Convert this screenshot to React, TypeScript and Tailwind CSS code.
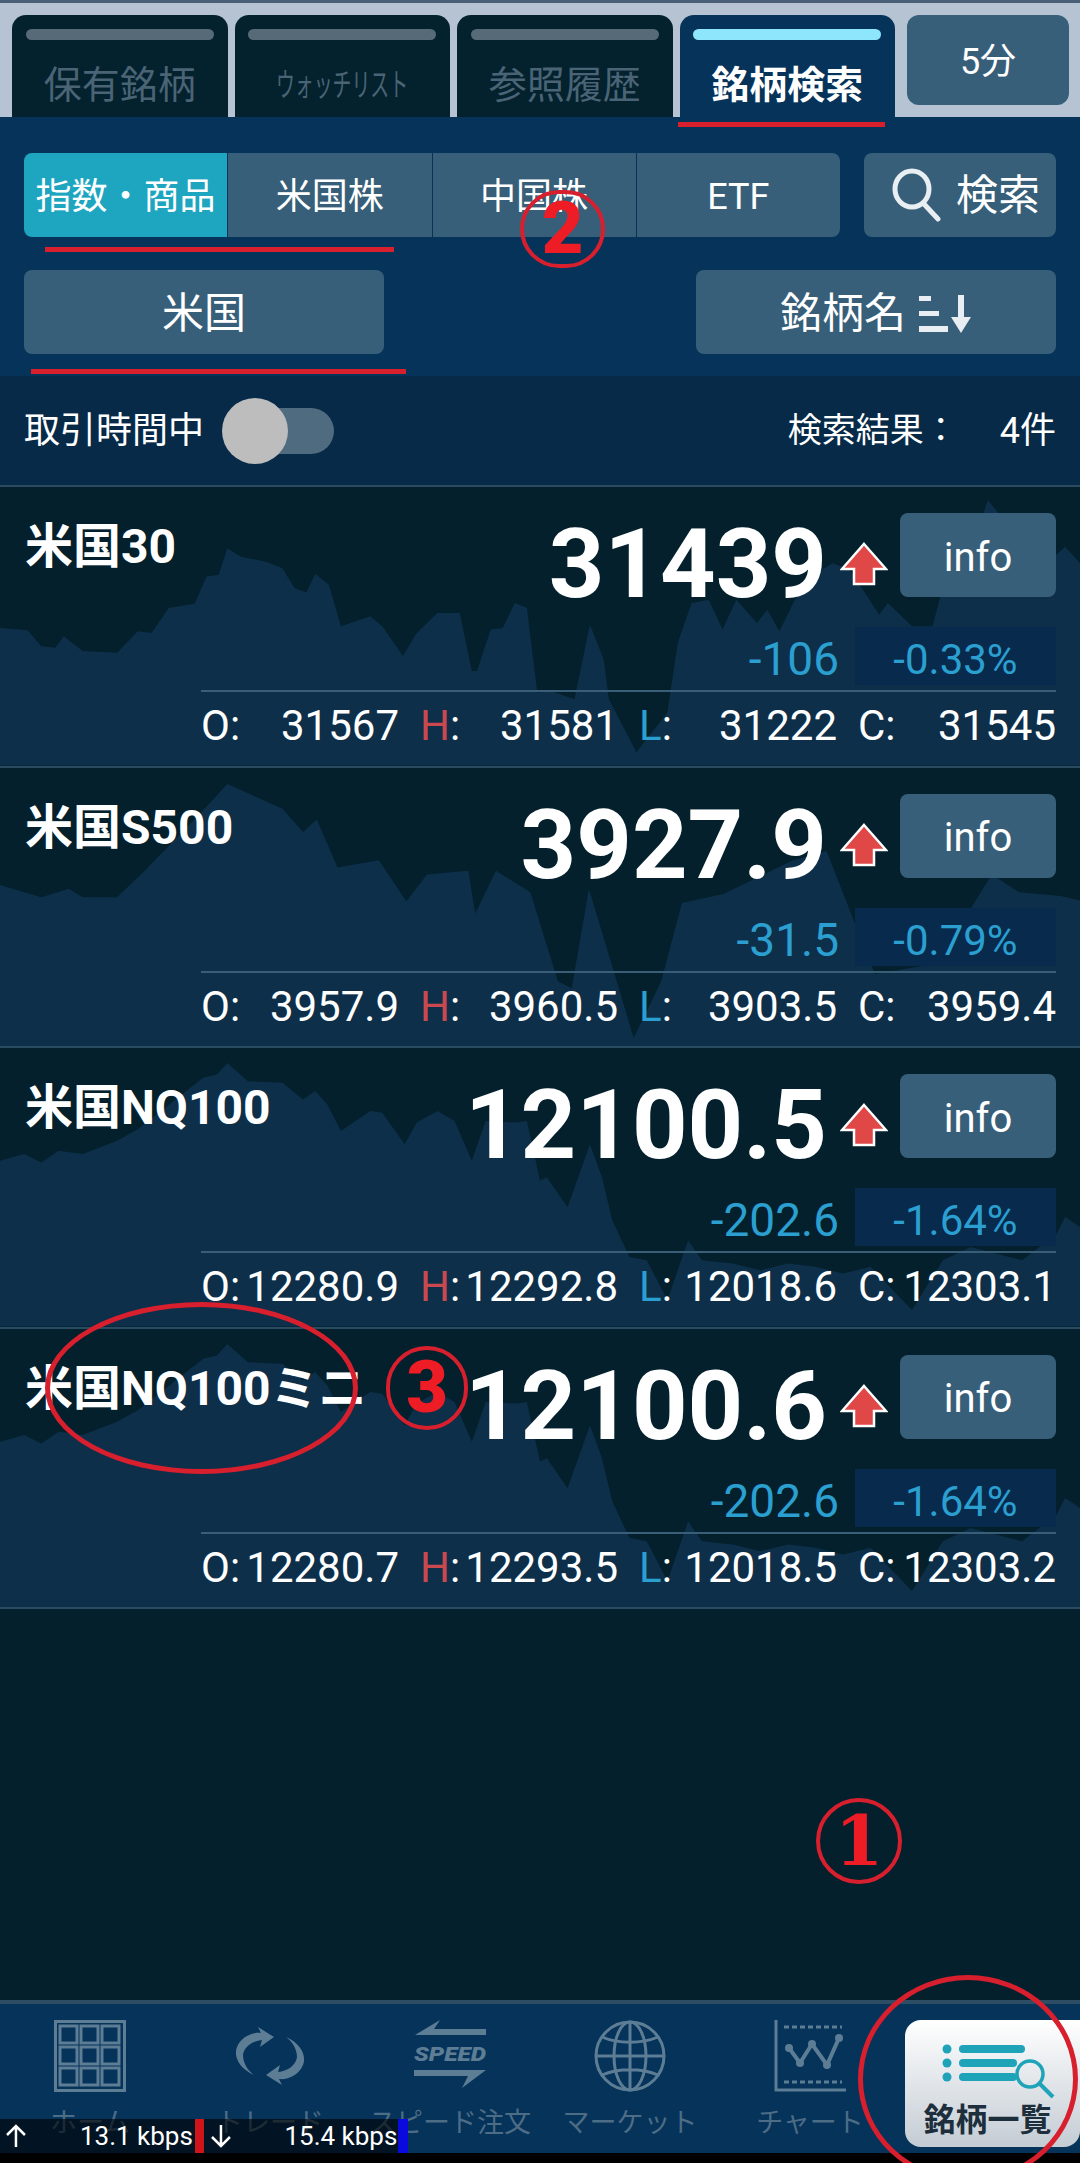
import React from 'react';

const CHART_A =
  '0,425 80,432 120,480 160,485 185,450 240,495 340,500 400,435 440,440 490,365 565,352 600,270 635,265 660,185 700,210 770,225 820,245 855,305 890,318 915,262 955,295 990,420 1075,390 1110,420 1170,510 1210,440 1270,380 1335,380 1370,555 1385,555 1425,430 1460,425 1495,350 1530,365 1560,620 1600,615 1668,640 1713,415 1753,520 1768,640 1848,800 1938,680 1968,470 2008,350 2058,340 2098,430 2138,340 2198,410 2228,370 2263,435 2308,340 2368,260 2418,230 2468,250 2553,385 2578,350 2628,400 2648,420 2708,420 2738,300 2818,200 2868,40 2908,90 3008,260 3093,180 3136,230';
const CHART_B =
  '0,353 120,390 200,364 240,390 340,390 420,310 580,139 660,48 820,123 880,193 920,155 980,300 1100,278 1180,402 1240,321 1360,310 1380,439 1440,310 1540,375 1620,643 1660,664 1710,364 1760,536 1840,814 1920,643 1980,407 2100,380 2200,330 2300,280 2400,250 2540,621 2720,590 2880,321 2960,375 3080,386 3136,400';
const CHART_C =
  '0,340 70,320 120,345 170,310 240,320 340,280 400,245 590,90 630,80 660,45 720,100 820,105 880,155 915,130 950,170 990,250 1075,190 1110,195 1175,290 1210,225 1270,190 1320,220 1370,340 1410,220 1500,225 1530,220 1568,400 1588,390 1648,480 1713,290 1748,390 1778,520 1828,630 1878,640 1938,760 1998,580 2038,640 2128,650 2208,670 2288,650 2368,660 2448,680 2528,660 2648,790 2738,640 2818,600 2968,640 3068,560 3093,510 3136,540';

const rows = [
  { name: '米国30', price: '31439', change: '-106', pct: '-0.33%', o: '31567', h: '31581', l: '31222', c: '31545', chart: CHART_A },
  { name: '米国S500', price: '3927.9', change: '-31.5', pct: '-0.79%', o: '3957.9', h: '3960.5', l: '3903.5', c: '3959.4', chart: CHART_B },
  { name: '米国NQ100', price: '12100.5', change: '-202.6', pct: '-1.64%', o: '12280.9', h: '12292.8', l: '12018.6', c: '12303.1', chart: CHART_C },
  { name: '米国NQ100ミニ', price: '12100.6', change: '-202.6', pct: '-1.64%', o: '12280.7', h: '12293.5', l: '12018.5', c: '12303.2', chart: CHART_C },
];

function Ohlc({ label, value, labelClass }: { label: string; value: string; labelClass: string }) {
  return (
    <div className="flex justify-between">
      <span>
        <span className={labelClass}>{label}</span>:
      </span>
      <span>{value}</span>
    </div>
  );
}

function QuoteRow({ row }: { row: (typeof rows)[number] }) {
  return (
    <div className="relative h-[280.5px] border-t-2 border-[#2b4b60]">
      {/* price history behind the row */}
      <svg className="absolute inset-0 h-full w-full" viewBox="0 0 3136 840" preserveAspectRatio="none">
        <polygon points={`${row.chart} 3136,840 0,840`} fill="#0d2f4a" />
      </svg>
      <div className="relative flex h-full flex-col pl-[25px] pr-6 text-white">
        <div className="flex h-[140px] items-start">
          <div className="mt-[36px] text-[48px] font-bold leading-[48px]">{row.name}</div>
          <div className="ml-auto mt-[29px] text-[97px] font-bold leading-[97px]">{row.price}</div>
          <svg className="ml-[13px] mt-[55px] shrink-0" width="48" height="44" viewBox="0 0 48 44">
            <polygon points="24,2 46,27 34,27 34,42 14,42 14,27 2,27" fill="#e04848" stroke="#fff" strokeWidth="2.5" />
          </svg>
          <div className="ml-3 mt-[26px] flex h-[84px] w-[156px] shrink-0 items-center justify-center rounded-lg bg-[#385f79] pt-[5px] text-[40px]">
            info
          </div>
        </div>
        <div className="flex h-[58px] items-center justify-end text-[#2a9fd0]">
          <div className="pt-[7px] text-[46px]">{row.change}</div>
          <div className="ml-4 flex h-full w-[201px] items-center justify-center bg-[#072a4d] pt-[7px] text-[42px]">{row.pct}</div>
        </div>
        <div className="ml-[176px] mt-[5px] h-[2px] bg-[#3a5e78]" />
        <div className="ml-[176px] mt-[11px] grid grid-cols-4 gap-x-[21px] text-[42px] leading-[46px]">
          <Ohlc label="O" value={row.o} labelClass="" />
          <Ohlc label="H" value={row.h} labelClass="text-[#c9494f]" />
          <Ohlc label="L" value={row.l} labelClass="text-[#2a9fd0]" />
          <Ohlc label="C" value={row.c} labelClass="" />
        </div>
      </div>
    </div>
  );
}

function Tab({ label, active, narrow }: { label: string; active?: boolean; narrow?: boolean }) {
  return (
    <div className={`flex w-[215.5px] flex-col items-center rounded-t-[14px] pt-[14px] ${active ? 'bg-[#05335a]' : 'bg-[#04212e]'}`}>
      <div className={`h-[11px] w-[188px] rounded-full ${active ? 'bg-[#8de6fb]' : 'bg-[#566a78]'}`} />
      <div
        className={`mt-[23px] leading-[44px] ${active ? 'font-bold text-white' : 'text-[#4a6476]'} ${narrow ? 'scale-x-[0.59] whitespace-nowrap text-[32px]' : 'text-[38px]'}`}
      >
        {label}
      </div>
    </div>
  );
}

function HomeIcon() {
  const cells = [6, 27, 48];
  return (
    <svg width="72" height="72" viewBox="0 0 72 72" fill="none" stroke="#5d7d95" strokeWidth="3">
      <rect x="1.5" y="1.5" width="69" height="69" />
      {cells.map((y) => cells.map((x) => <rect key={`${x}-${y}`} x={x} y={y} width="17" height="17" />))}
    </svg>
  );
}

function SyncIcon() {
  const d = 'M20 48C6 42-1 30 3 20C7 10 18 5 27 6L24 0L40 10L26 20L28 13C18 14 10 20 9 28C9 36 14 44 20 48Z';
  return (
    <svg width="72" height="72" viewBox="0 -7 72 72" fill="#5d7d95">
      <path d={d} />
      <path d={d} transform="rotate(180 36 29)" />
    </svg>
  );
}

function SpeedIcon() {
  return (
    <svg width="72" height="72" viewBox="0 0 72 72" fill="#5d7d95">
      <polygon points="1,15 26,0 20,9 72,9 72,15" />
      <text x="0" y="41" fontSize="20" fontWeight="900" fontStyle="italic" textLength="72" lengthAdjust="spacingAndGlyphs">
        SPEED
      </text>
      <polygon points="0,50 72,50 48,68 54,56 0,56" />
    </svg>
  );
}

function GlobeIcon() {
  return (
    <svg width="72" height="72" viewBox="0 0 72 72" fill="none" stroke="#5d7d95" strokeWidth="3">
      <circle cx="36" cy="36" r="34" />
      <ellipse cx="36" cy="36" rx="16" ry="34" />
      <path d="M36 2V70M2 36H70M8 17C24 24 48 24 64 17M8 55C24 48 48 48 64 55" />
    </svg>
  );
}

function ChartIcon() {
  return (
    <svg width="72" height="72" viewBox="0 0 72 72" fill="none" stroke="#5d7d95">
      <path d="M2 0V70H72" strokeWidth="3" />
      <path d="M10 7H68M10 62H68" strokeWidth="3" strokeDasharray="5 3" />
      <polyline points="15,28 26,43 38,24 53,45 65,18" strokeWidth="4" />
      {[[15, 28], [26, 43], [38, 24], [53, 45], [65, 18]].map(([cx, cy]) => (
        <circle key={cx} cx={cx} cy={cy} r="4" fill="#5d7d95" stroke="none" />
      ))}
    </svg>
  );
}

function NavItem({ label, children }: { label: string; children: React.ReactNode }) {
  return (
    <div className="flex flex-col items-center pt-4">
      {children}
      <div className="mt-[13px] whitespace-nowrap text-[27px] leading-[36px] text-[#4d6c85]">{label}</div>
    </div>
  );
}

export default function App() {
  return (
    <div className="relative flex h-[2163px] w-[1080px] flex-col overflow-hidden bg-[#03202c] text-white [font-family:Roboto,'Noto_Sans_CJK_JP',sans-serif]">
      {/* top tabs */}
      <div className="h-[117px] shrink-0 border-t-[3px] border-[#4a5f78] bg-[#b5c3d2] pt-3">
        <div className="flex h-full gap-[7px] pl-3">
          <Tab label="保有銘柄" />
          <Tab label="ウォッチリスト" narrow />
          <Tab label="参照履歴" />
          <Tab label="銘柄検索" active />
          <div className="ml-[5px] flex h-[90px] w-[162px] items-center justify-center rounded-xl bg-[#385f79] pt-[3px] text-[36px]">5分</div>
        </div>
      </div>

      {/* filters */}
      <div className="flex h-[259px] shrink-0 flex-col gap-[33px] bg-[#05335a] px-6 pt-9">
        <div className="flex h-[84px] justify-between">
          <div className="flex w-[816px] gap-px overflow-hidden rounded-lg text-[36px]">
            <div className="flex flex-1 items-center justify-center whitespace-nowrap bg-[#1ea5bf] pt-[3px]">指数・商品</div>
            <div className="flex flex-1 items-center justify-center bg-[#385f79] pt-[3px]">米国株</div>
            <div className="flex flex-1 items-center justify-center bg-[#385f79] pt-[3px]">中国株</div>
            <div className="flex flex-1 items-center justify-center bg-[#385f79] pt-[3px]">ETF</div>
          </div>
          <div className="flex w-[192px] items-center justify-center gap-[14px] rounded-lg bg-[#385f79] pl-3 text-[42px]">
            <svg width="50" height="54" viewBox="0 0 50 54" fill="none" stroke="#e8eef2" strokeWidth="5" strokeLinecap="round">
              <ellipse cx="20" cy="21" rx="17" ry="18" />
              <path d="M32 36L46 51" />
            </svg>
            <span>検索</span>
          </div>
        </div>
        <div className="flex h-[84px] justify-between text-[42px]">
          <div className="flex w-[360px] items-center justify-center rounded-lg bg-[#385f79] pt-[3px]">米国</div>
          <div className="flex w-[360px] items-center justify-center gap-[13px] rounded-lg bg-[#385f79] pt-[3px]">
            <span>銘柄名</span>
            <svg width="53" height="38" viewBox="0 0 53 38" fill="#e8eef2">
              <rect x="0" y="1" width="12" height="5" />
              <rect x="0" y="16" width="20" height="5" />
              <rect x="0" y="31" width="29" height="6" />
              <polygon points="39,0 45,0 45,22 52,22 42,38 32,22 39,22" />
            </svg>
          </div>
        </div>
      </div>

      <div className="flex h-[109px] shrink-0 items-center justify-between bg-[#062a47] px-6 text-[36px]">
        <div className="flex items-center">
          <span>取引時間中</span>
          <div className="relative ml-[19px] h-[46px] w-[111px] rounded-full bg-[#4f6b80]">
            <div className="absolute -left-[1px] -top-[10px] h-[66px] w-[66px] rounded-full bg-[#bdbdbd]" />
          </div>
        </div>
        <div className="flex items-center gap-[42px] text-[34px]">
          <span>検索結果：</span>
          <span className="text-[36px]">4件</span>
        </div>
      </div>

      {/* quote list */}
      <div className="flex-1">
        {rows.map((row) => (
          <QuoteRow key={row.name} row={row} />
        ))}
        <div className="h-[2px] bg-[#2b4b60]" />
      </div>

      {/* bottom nav */}
      <div className="grid h-[153px] shrink-0 grid-cols-6 border-t-4 border-[#2c4d64] bg-[#05335a]">
        <NavItem label="ホーム"><HomeIcon /></NavItem>
        <NavItem label="トレード"><SyncIcon /></NavItem>
        <NavItem label="スピード注文"><SpeedIcon /></NavItem>
        <NavItem label="マーケット"><GlobeIcon /></NavItem>
        <NavItem label="チャート"><ChartIcon /></NavItem>
        <div className="ml-[5px] mt-4 flex h-[127px] flex-col items-center rounded-l-2xl rounded-br-2xl bg-gradient-to-b from-white to-[#c4ccd4] pt-[23px]">
          <svg className="ml-3" width="113" height="56" viewBox="0 0 113 56" fill="none" stroke="#1fa3b8">
            <g fill="#1fa3b8" stroke="none">
              <circle cx="5" cy="6" r="4.5" />
              <circle cx="5" cy="20" r="4.5" />
              <circle cx="5" cy="34" r="4.5" />
              <rect x="17" y="2" width="66" height="8" rx="4" />
              <rect x="17" y="16" width="58" height="8" rx="4" />
              <rect x="17" y="30" width="58" height="8" rx="4" />
            </g>
            <circle cx="88" cy="31" r="13" strokeWidth="3.5" />
            <path d="M98 41L111 54" strokeWidth="4" />
          </svg>
          <div className="mr-[10px] mt-[2px] whitespace-nowrap text-[32px] font-bold leading-[38px] text-[#1d2f3d]">銘柄一覧</div>
        </div>
      </div>
      <div className="h-[10px] shrink-0 bg-black" />

      {/* network speed overlay */}
      <div className="absolute left-0 top-[2119px] flex h-[34px] w-[408px] items-center bg-black/60 text-[26px] leading-none">
        <svg className="ml-[5px]" width="22" height="24" viewBox="0 0 22 24" fill="none" stroke="#fff" strokeWidth="2.5">
          <path d="M11 23V2M2 11L11 2L20 11" />
        </svg>
        <span className="ml-[53px] w-[115px]">13.1 kbps</span>
        <div className="h-full w-[9px] bg-[#d0141c]" />
        <svg className="ml-[6px]" width="22" height="24" viewBox="0 0 22 24" fill="none" stroke="#fff" strokeWidth="2.5">
          <path d="M11 1V22M2 13L11 22L20 13" />
        </svg>
        <span className="ml-[53px] w-[114px]">15.4 kbps</span>
        <div className="h-full w-[10px] bg-[#0a0adf]" />
      </div>

      {/* red annotations drawn on top of the screenshot */}
      <div className="absolute left-[678px] top-[122px] h-[5px] w-[207px] bg-[#d81f2e]" />
      <div className="absolute left-[45px] top-[247px] h-[5px] w-[349px] bg-[#d81f2e]" />
      <div className="absolute left-[31px] top-[369px] h-[5px] w-[375px] bg-[#d81f2e]" />
      <div className="absolute left-[520px] top-[190px] flex h-[78px] w-[85px] items-center justify-center rounded-full border-4 border-[#d81f2e] text-[72px] font-black leading-none text-[#ee1c25]">2</div>
      <div className="absolute left-[386px] top-[1346px] flex h-[84px] w-[82px] items-center justify-center rounded-full border-4 border-[#d81f2e] text-[72px] font-black leading-none text-[#ee1c25]">3</div>
      <div className="absolute left-[816px] top-[1798px] flex h-[86px] w-[86px] items-center justify-center rounded-full border-4 border-[#d81f2e] text-[70px] font-bold leading-none text-[#ee1c25] [font-family:'DejaVu_Serif',serif]">1</div>
      <div className="absolute left-[45px] top-[1302px] h-[172px] w-[313px] rounded-[50%] border-[5px] border-[#d81f2e]" />
      <div className="absolute left-[858px] top-[1975px] h-[208px] w-[220px] rounded-[50%] border-[5px] border-[#d81f2e]" />
    </div>
  );
}
